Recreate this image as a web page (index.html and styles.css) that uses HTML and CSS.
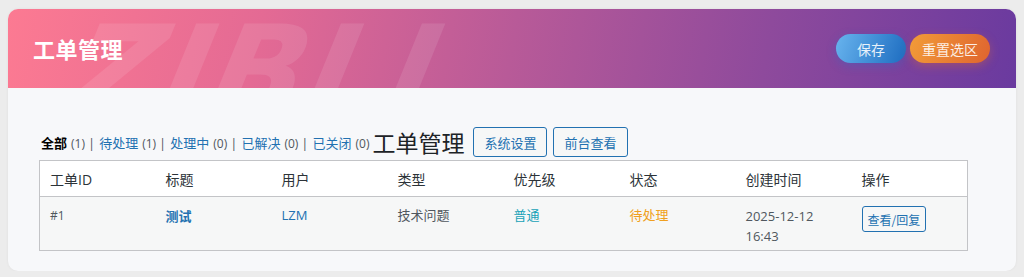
FILE: index.html
```html
<!DOCTYPE html>
<html lang="zh-CN">
<head>
<meta charset="utf-8">
<title>工单管理</title>
<link rel="stylesheet" href="styles.css">
</head>
<body>
<div class="card">
  <div class="hero">
    <div class="watermark">ZIBLL</div>
    <div class="hero-title">工单管理</div>
    <div class="hero-actions">
      <button class="pill pill-blue">保存</button>
      <button class="pill pill-orange">重置选区</button>
    </div>
  </div>
  <div class="content">
    <div class="toolbar">
      <ul class="filters">
        <li><a class="current">全部</a><span class="count">(1)</span><span class="sep">|</span></li>
        <li><a>待处理</a><span class="count">(1)</span><span class="sep">|</span></li>
        <li><a>处理中</a><span class="count">(0)</span><span class="sep">|</span></li>
        <li><a>已解决</a><span class="count">(0)</span><span class="sep">|</span></li>
        <li><a>已关闭</a><span class="count">(0)</span></li>
      </ul>
      <h1 class="page-title">工单管理</h1>
      <a class="title-action first">系统设置</a>
      <a class="title-action">前台查看</a>
    </div>
    <table class="tickets">
      <thead>
        <tr>
          <th>工单ID</th><th>标题</th><th>用户</th><th>类型</th><th>优先级</th><th>状态</th><th>创建时间</th><th>操作</th>
        </tr>
      </thead>
      <tbody>
        <tr>
          <td class="id">#1</td>
          <td><a class="t-title">测试</a></td>
          <td><a class="t-user">LZM</a></td>
          <td>技术问题</td>
          <td class="prio">普通</td>
          <td class="status">待处理</td>
          <td class="date">2025-12-12<br>16:43</td>
          <td><a class="btn-small">查看/回复</a></td>
        </tr>
      </tbody>
    </table>
  </div>
</div>
</body>
</html>
```
FILE: styles.css
```css
* { box-sizing: border-box; }
body {
  margin: 0;
  background: #ececec;
  font-family: "Open Sans", "Noto Sans CJK SC", sans-serif;
  color: #3c434a;
}
.card {
  margin: 9px 8px 0 8px;
  width: 1008px;
  height: 262px;
  background: #f7f8fa;
  border-radius: 10px;
  overflow: hidden;
  box-shadow: 0 0 3px rgba(0,0,0,0.06);
}
.hero {
  position: relative;
  height: 79px;
  padding: 0 26px 0 25px;
  display: flex;
  align-items: center;
  justify-content: space-between;
  background: linear-gradient(100deg, #fc7a92 0%, #e46a94 25%, #b85a98 50%, #8e4a9c 75%, #6a3a9f 100%);
  overflow: hidden;
}
.watermark {
  position: absolute;
  left: 66px;
  top: 0;
  font-family: "DejaVu Sans", sans-serif;
  font-weight: 900;
  font-style: italic;
  font-size: 124px;
  line-height: 1;
  letter-spacing: 2px;
  color: rgba(255,255,255,0.1);
  transform: skewX(-12deg);
  pointer-events: none;
}
.hero-title {
  position: relative;
  color: #fff;
  font-family: "Noto Sans CJK SC", sans-serif;
  font-weight: 700;
  font-size: 22px;
  letter-spacing: 0.5px;
  margin-top: -2px;
}
.hero-actions {
  position: relative;
  display: flex;
  gap: 4px;
  margin-top: 0;
}
.pill {
  border: 0;
  height: 29px;
  border-radius: 15px;
  color: rgba(255,255,255,0.88);
  font-family: "Noto Sans CJK SC", sans-serif;
  font-size: 14px;
  padding: 0;
  cursor: pointer;
}
.pill-blue {
  width: 70px;
  background: linear-gradient(110deg, #68b4ee, #1d6cc0);
  box-shadow: 0 3px 10px rgba(40,110,200,0.35);
}
.pill-orange {
  width: 80px;
  background: linear-gradient(110deg, #f29c38, #df642f);
  box-shadow: 0 3px 10px rgba(230,110,40,0.35);
}
.content {
  padding: 39px 0 0 31px;
}
.toolbar {
  display: flex;
  align-items: center;
  height: 30px;
  padding-left: 2px;
}
.filters {
  list-style: none;
  margin: 0;
  padding: 0;
  display: flex;
  align-items: baseline;
  font-size: 13px;
  color: #50575e;
}
.filters li { white-space: nowrap; display: flex; align-items: baseline; }
.filters a { color: #2271b1; font-family: "Noto Sans CJK SC", sans-serif; }
.filters a.current { color: #000; font-weight: 700; }
.filters .count { color: #50575e; font-size: 12px; margin-left: 4px; }
.filters .sep { margin: 0 4px 0 3px; color: #50575e; }
.page-title {
  margin: 0 0 0 3px;
  font-family: "Noto Sans CJK SC", sans-serif;
  font-weight: 400;
  font-size: 23px;
  color: #1d2327;
  line-height: 30px;
}
.title-action {
  margin-left: 6px;
  height: 30px;
  padding: 0 10px;
  border: 1px solid #2271b1;
  border-radius: 3px;
  background: #f6f7f7;
  color: #2271b1;
  font-family: "Noto Sans CJK SC", sans-serif;
  font-size: 13px;
  display: flex;
  align-items: center;
}
.title-action.first { margin-left: 9px; }
.tickets {
  margin-top: 3px;
  width: 929px;
  border-collapse: collapse;
  table-layout: fixed;
  border: 1px solid #c3c4c7;
  font-size: 13px;
}
.tickets th {
  background: #fff;
  height: 36px;
  text-align: left;
  font-weight: 400;
  font-size: 14px;
  color: #2c3338;
  padding: 0 10px;
  border-bottom: 1px solid #c3c4c7;
  font-family: "Open Sans", "Noto Sans CJK SC", sans-serif;
}
.tickets td {
  background: #f6f7f7;
  height: 54px;
  vertical-align: top;
  padding: 9px 10px 0 10px;
  color: #50575e;
  font-size: 13px;
  line-height: 19px;
}
.tickets td.id { font-size: 12px; }
.t-title { color: #2271b1; font-weight: 700; font-family: "Noto Sans CJK SC", sans-serif; }
.t-user { color: #2271b1; }
.prio { color: #17a2b8 !important; }
.status { color: #f0a020 !important; }
.date { line-height: 20px !important; }
.btn-small {
  display: inline-flex;
  align-items: center;
  height: 26px;
  padding: 0 5px;
  border: 1px solid #2271b1;
  border-radius: 3px;
  background: #f6f7f7;
  color: #2271b1;
  font-size: 12px;
  font-family: "Noto Sans CJK SC", sans-serif;
}
```
